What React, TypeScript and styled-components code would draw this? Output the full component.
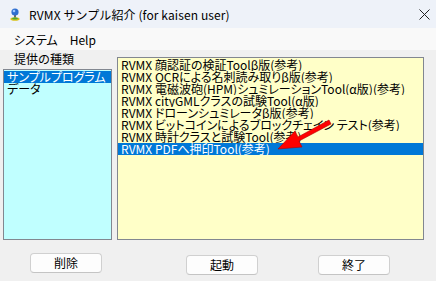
import React, { useState } from "react";
import styled, { createGlobalStyle } from "styled-components";

const GlobalStyle = createGlobalStyle`
  html, body {
    margin: 0;
    padding: 0;
    background: #f0f0f0;
  }
  body {
    font-family: "Noto Sans CJK JP", "Liberation Sans", sans-serif;
    color: #000;
  }
`;

const Window = styled.div`
  display: flex;
  flex-direction: column;
  width: 436px;
  height: 281px;
  overflow: hidden;
  background: #f0f0f0;
`;

const TitleBar = styled.div`
  display: flex;
  align-items: center;
  height: 28px;
  padding-left: 10px;
  background: #eef2f9;
  font-size: 12px;
`;

const Title = styled.span`
  margin-left: 9px;
  flex: 1;
  font-family: "Noto Sans CJK JP", sans-serif;
  letter-spacing: 0.1px;
`;

const CloseButton = styled.div`
  width: 24px;
  height: 28px;
  display: flex;
  align-items: center;
  justify-content: center;
`;

const MenuBar = styled.div`
  display: flex;
  align-items: center;
  height: 22px;
  padding-left: 14px;
  gap: 12px;
  background: #f9f9f9;
  font-size: 12px;
  font-feature-settings: "palt";
`;

const Body = styled.div`
  display: grid;
  grid-template-columns: 109px 307px;
  column-gap: 5px;
  padding: 0 0 0 3px;
  height: 190px;
`;

const LeftColumn = styled.div`
  display: flex;
  flex-direction: column;
`;

const GroupLabel = styled.div`
  height: 19px;
  padding-left: 11px;
  font-size: 12px;
  line-height: 17px;
`;

const ListBox = styled.div<{ $bg: string; $top: number }>`
  position: relative;
  margin-top: ${(p) => p.$top}px;
  flex: 1;
  height: ${(p) => 240 - (50 + p.$top)}px;
  box-sizing: border-box;
  background: ${(p) => p.$bg};
  border: 1px solid #828790;
  padding: 1px 0 0 0;
`;

const Item = styled.div<{ $selected?: boolean }>`
  height: 12px;
  line-height: 12px;
  font-size: 12px;
  padding-left: 3px;
  white-space: nowrap;
  overflow: hidden;
  font-feature-settings: "palt";
  background: ${(p) => (p.$selected ? "#0078d7" : "transparent")};
  color: ${(p) => (p.$selected ? "#fff" : "#000")};
`;

const Overlay = styled.svg`
  position: absolute;
  left: 0;
  top: 0;
  pointer-events: none;
`;

const Footer = styled.div`
  display: flex;
  align-items: flex-start;
  padding-left: 30px;
  padding-top: 13px;
`;

const Button = styled.button<{ $gap: number; $drop: number }>`
  margin-left: ${(p) => p.$gap}px;
  margin-top: ${(p) => p.$drop}px;
  width: 72px;
  height: 20px;
  padding: 0;
  box-sizing: border-box;
  background: #fdfdfd;
  border: 1px solid #d0d0d0;
  border-bottom-color: #c4c4c4;
  border-radius: 4px;
  font-family: "Noto Sans CJK JP", sans-serif;
  font-size: 12px;
  line-height: 18px;
  color: #000;
`;

const AppIcon = () => (
  <svg width="10" height="13" viewBox="0 0 10 13">
    <rect x="4" y="6" width="2" height="4" fill="#6b6b6b" />
    <circle cx="5" cy="4" r="3.6" fill="#2f6fd0" />
    <circle cx="4" cy="3" r="1.3" fill="#9cc6ff" />
    <ellipse cx="5" cy="11" rx="4.6" ry="1.8" fill="#d9c21a" />
    <ellipse cx="5" cy="10.6" rx="3" ry="1" fill="#4da63a" />
  </svg>
);

const programs = [
  "RVMX 顔認証の検証Toolβ版(参考)",
  "RVMX OCRによる名刺読み取りβ版(参考)",
  "RVMX 電磁波砲(HPM)シュミレーションTool(α版)(参考)",
  "RVMX cityGMLクラスの試験Tool(α版)",
  "RVMX ドローンシュミレータβ版(参考)",
  "RVMX ビットコインによるブロックチェイン テスト(参考)",
  "RVMX 時計クラスと試験Tool(参考)",
  "RVMX PDFへ押印Tool(参考)",
];

const kinds = ["サンプルプログラム", "データ"];

export default function App() {
  const [kind, setKind] = useState(0);
  const [program, setProgram] = useState(7);

  return (
    <Window>
      <GlobalStyle />
      <TitleBar>
        <AppIcon />
        <Title>RVMX サンプル紹介 (for kaisen user)</Title>
        <CloseButton>
          <svg width="11" height="11" viewBox="0 0 11 11">
            <path d="M0.5 0.5 L10.5 10.5 M10.5 0.5 L0.5 10.5" stroke="#222" strokeWidth="1" />
          </svg>
        </CloseButton>
      </TitleBar>
      <MenuBar>
        <span>システム</span>
        <span>Help</span>
      </MenuBar>
      <Body>
        <LeftColumn>
          <GroupLabel>提供の種類</GroupLabel>
          <ListBox $bg="#c0ffff" $top={0}>
            {kinds.map((k, i) => (
              <Item key={k} $selected={i === kind} onClick={() => setKind(i)}>
                {k}
              </Item>
            ))}
          </ListBox>
        </LeftColumn>
        <ListBox $bg="#ffffc8" $top={7}>
          {programs.map((p, i) => (
            <Item key={p} $selected={i === program} onClick={() => setProgram(i)}>
              {p}
            </Item>
          ))}
          <Overlay width="305" height="181" viewBox="0 0 305 181">
            <polygon
              points="211,62 180,79 177,73 160,91 184,89 181,83 213,66"
              fill="#ff0000"
              stroke="#b00000"
              strokeWidth="0.6"
            />
          </Overlay>
        </ListBox>
      </Body>
      <Footer>
        <Button $gap={0} $drop={0}>削除</Button>
        <Button $gap={84} $drop={2}>起動</Button>
        <Button $gap={60} $drop={2}>終了</Button>
      </Footer>
    </Window>
  );
}
